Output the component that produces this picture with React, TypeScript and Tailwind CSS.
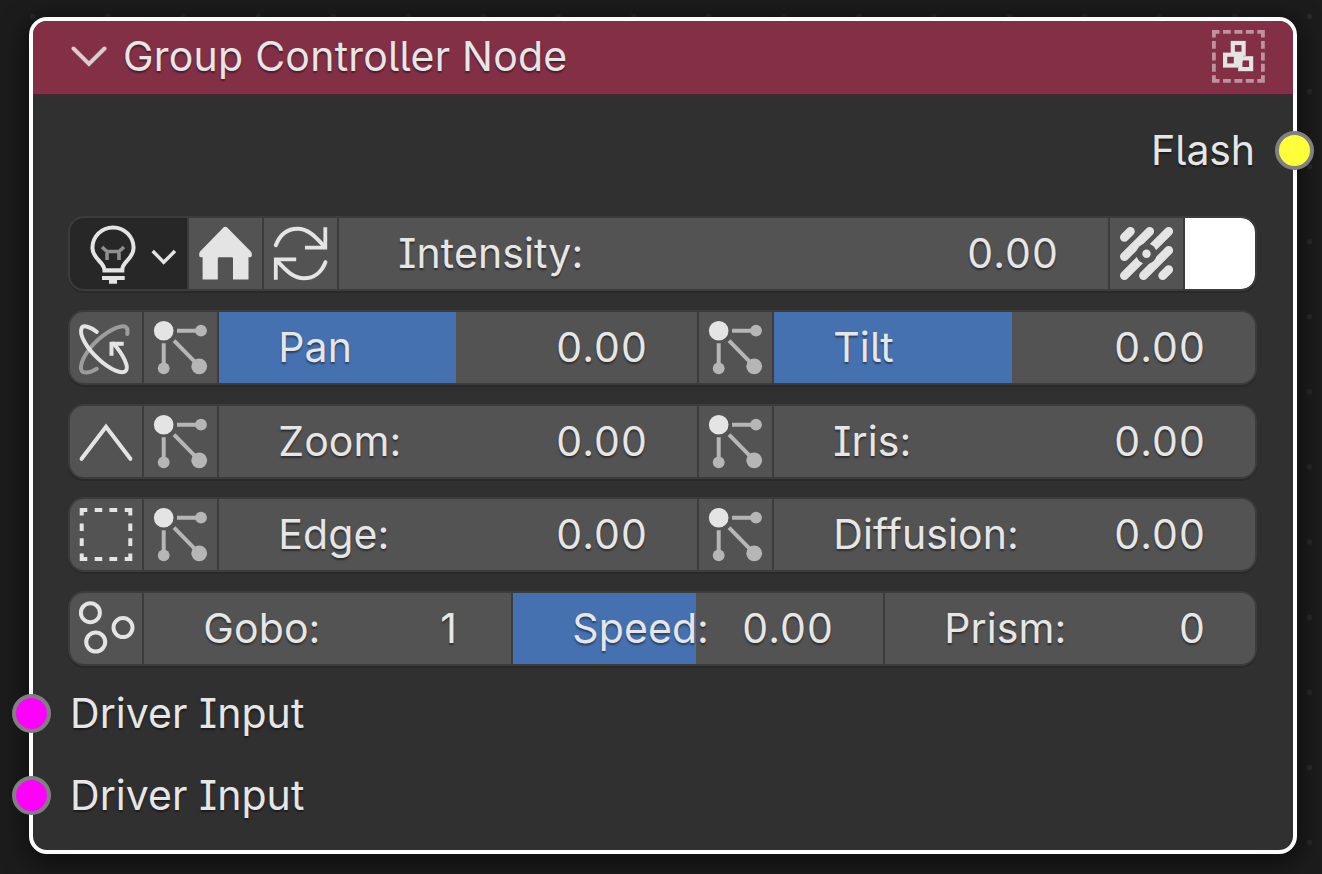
import type { ReactNode } from "react";

const LIGHT = "#e4e4e4";
const DIM = "#b6b6b6";

function Icon({ w, h = 71, children }: { w: number; h?: number; children: ReactNode }) {
  return (
    <svg width={w} height={h} viewBox={`0 0 ${w} ${h}`} fill="none" stroke={LIGHT} strokeWidth={4} className="block shrink-0">
      {children}
    </svg>
  );
}

function BulbIcon() {
  return (
    <Icon w={117}>
      <path d="M34.3 51.5C34 44 22.4 40.5 22.4 30A20.6 20.6 0 0 1 63.6 30C63.6 40.5 52.2 44 52.2 51.5" />
      <path d="M32.5 52.4H54.3" strokeWidth={4.2} />
      <path d="M32 60H54.7" strokeWidth={4.2} />
      <path d="M39 63H47" strokeWidth={5.5} />
      <path d="M32 29L37 33.5H49L54 29M37 33.5V42M49 33.5V42" stroke="#8f8f8f" strokeWidth={3.6} />
      <path d="M82.7 33L93.7 44.3L105 33" strokeWidth={3.4} />
    </Icon>
  );
}

function HomeIcon() {
  return (
    <Icon w={73}>
      <path
        d="M34.7 9.3Q36.3 8 37.9 9.3L61.6 33.2Q62.8 34.4 62.8 36V37.6Q62.8 39.3 61 39.3H59.5V61.5H44V40.5Q44 39.3 42.8 39.3H30Q28.8 39.3 28.8 40.5V61.5H13.6V39.3H12Q10.2 39.3 10.2 37.4V35.8Q10.2 34.2 11.3 33.2Z"
        fill={LIGHT}
        stroke="none"
      />
    </Icon>
  );
}

function RefreshIcon() {
  return (
    <Icon w={73}>
      <path d="M11.8 27.2C16 16.5 24 10.7 33.5 10.7C44.5 10.7 51.5 19 60.5 28.5" strokeLinecap="round" />
      <path d="M61.3 9.2V29.6H41" strokeWidth={3.8} />
      <path d="M61.4 44.2C57.5 54.5 49.5 60.3 40 60.3C29 60.3 21.5 52 12.7 42.5" strokeLinecap="round" />
      <path d="M11.8 61.8V41.4H32.2" strokeWidth={3.8} />
    </Icon>
  );
}

function HatchIcon() {
  return (
    <Icon w={73}>
      <mask id="hatch-hole">
        <rect width="73" height="71" fill="white" stroke="none" />
        <circle cx="36.5" cy="35.7" r="10.2" fill="black" stroke="none" />
      </mask>
      <g mask="url(#hatch-hole)" strokeWidth={8.8} strokeLinecap="round">
        <path d="M14.4 19.3L20.4 13.3M14.4 38.6L39.7 13.3M14.4 57.6L58.7 13.3M33.5 57.6L58.7 32.4M52.7 57.6L58.7 51.6" />
      </g>
      <circle cx="36.5" cy="35.7" r="4.2" fill={LIGHT} stroke="none" />
    </Icon>
  );
}

function OrbitIcon() {
  return (
    <Icon w={72}>
      <g strokeLinecap="round">
        <path d="M57.2 22C58.6 16 56 13.6 51 14.5C40.5 16.5 25 28 16.3 41.5C10.5 50.5 9.5 58 13 60C16.5 61.5 21.5 60 26.8 56.8" stroke="#9d9d9d" />
        <path d="M26.8 19.8C20.5 15 13 12.5 11.7 16C8.5 22.5 17 36.5 28.5 47C40 57.7 52 62.5 55.6 59C59.5 55 53.5 43 43.5 31.5" />
      </g>
      <path d="M53.7 31.7H41.5V43.7" />
    </Icon>
  );
}

function KeyNodesIcon() {
  return (
    <Icon w={73}>
      <g stroke={DIM} strokeWidth={4}>
        <path d="M33 18.7H57M19.7 31.3V56M30 28.7L55.3 54.3" />
      </g>
      <g fill={DIM} stroke="none">
        <circle cx="57" cy="18.7" r="5.9" />
        <circle cx="19.7" cy="56.3" r="5.9" />
        <circle cx="55.2" cy="54.3" r="7.9" />
      </g>
      <circle cx="19.7" cy="18.7" r="9.8" fill={LIGHT} stroke="none" />
    </Icon>
  );
}

function PeakIcon() {
  return (
    <Icon w={72}>
      <path d="M11.6 52.8L36 20.8L60.4 52.8" strokeLinecap="round" />
    </Icon>
  );
}

function DashedSquareIcon() {
  return (
    <Icon w={72}>
      <path d="M11.7 16.5V10.9H17.3M54.7 10.9H60.3V16.5M60.3 54.5V60.1H54.7M17.3 60.1H11.7V54.5M24.7 10.9H32.3M39.4 10.9H47.2M24.7 60.1H32.3M39.4 60.1H47.2M11.7 24.4V32M11.7 39.3V47M60.3 24.4V32M60.3 39.3V47" />
    </Icon>
  );
}

function CirclesIcon() {
  return (
    <Icon w={72}>
      <circle cx="20.4" cy="19.7" r="9.5" />
      <circle cx="53" cy="34.6" r="9.5" />
      <circle cx="25.7" cy="49" r="9.5" />
    </Icon>
  );
}

function GroupIcon() {
  return (
    <Icon w={53} h={53}>
      <path
        stroke="#bd939f"
        strokeWidth={3.8}
        d="M1.9 7.5V1.9H7.5M45.3 1.9H50.9V7.5M50.9 45.3V50.9H45.3M7.5 50.9H1.9V45.3M11 1.9H18.8M22.4 1.9H30.4M33.8 1.9H41.8M11 50.9H18.8M22.4 50.9H30.4M33.8 50.9H41.8M1.9 11V18.8M1.9 22.4V30.4M1.9 33.8V41.8M50.9 11V18.8M50.9 22.4V30.4M50.9 33.8V41.8"
      />
      <rect x="20.8" y="13" width="10.8" height="10.8" strokeWidth={4.2} />
      <rect x="13.1" y="24.7" width="10.8" height="10.8" strokeWidth={4.2} />
      <rect x="28.3" y="28.3" width="10.8" height="10.8" strokeWidth={4.2} />
      <path d="M23 23H31V29L29 37L23 35Z" fill={LIGHT} stroke="none" />
    </Icon>
  );
}

const rowClass =
  "flex h-[75px] w-[1189px] gap-[2px] overflow-hidden rounded-[16px] border-2 border-[#3c3c3c] bg-[#3c3c3c] shadow-[0_2px_0_#292929]";

function IconCell({ children, dark = false }: { children: ReactNode; dark?: boolean }) {
  return <div className={dark ? "shrink-0 bg-[#272727]" : "shrink-0 bg-[#535353]"}>{children}</div>;
}

function Field({ label, value, width, fill = 0 }: { label: string; value: string; width: number; fill?: number }) {
  return (
    <div
      className="flex shrink-0 items-center justify-between pr-[49px] pb-px pl-[59.3px]"
      style={{ width, background: `linear-gradient(to right, #4671b1 ${fill}px, #535353 ${fill}px)` }}
    >
      <span>{label}</span>
      <span className={value === "1" ? "pr-[5px]" : "tracking-[1.1px]"}>{value}</span>
    </div>
  );
}

function Socket({ className }: { className: string }) {
  return <div className={`absolute size-[39px] rounded-full border-4 border-[#808080] ${className}`} />;
}

export default function App() {
  return (
    <main className="h-[874px] w-[1322px] overflow-hidden bg-[#1c1c1c] bg-[radial-gradient(circle_at_33px_16.5px,#292929_2.4px,transparent_3.2px)] bg-[size:75.1px_75.1px] pt-[16.5px] pl-[29px] font-['Inter',sans-serif] text-[41px] leading-[50px] tracking-[0.1px] whitespace-nowrap text-[#e6e6e6] [font-feature-settings:'cv08','cv05'] [text-shadow:0_2px_2px_rgba(0,0,0,0.45)]">
      <section className="relative flex h-[837px] w-[1268px] flex-col rounded-[18px] border-4 border-white bg-[#303030] shadow-[0_6px_24px_4px_rgba(0,0,0,0.5)]">
        <header className="flex h-[75px] shrink-0 items-center rounded-t-[14px] border-b-2 border-[#4a2431] bg-[#833047] pr-[28.5px] pb-[2px] pl-[38px]">
          <Icon w={36} h={24}>
            <path d="M2.5 4.5L18 20L33.5 4.5" stroke="#d9cdd0" strokeLinecap="round" />
          </Icon>
          <h1 className="ml-[16px] grow tracking-[0.23px]">Group Controller Node</h1>
          <GroupIcon />
        </header>

        <div className="mt-[29px] flex h-[51px] shrink-0 justify-end pr-[38px] tracking-[-0.1px]">Flash</div>

        <div className="mt-[40.5px] ml-[35px] flex flex-col gap-[18.75px]">
          <div className={rowClass}>
            <IconCell dark><BulbIcon /></IconCell>
            <IconCell><HomeIcon /></IconCell>
            <IconCell><RefreshIcon /></IconCell>
            <Field label="Intensity:" value="0.00" width={769} />
            <IconCell><HatchIcon /></IconCell>
            <div className="grow rounded-r-[14px] bg-white" />
          </div>
          <div className={rowClass}>
            <IconCell><OrbitIcon /></IconCell>
            <IconCell><KeyNodesIcon /></IconCell>
            <Field label="Pan" value="0.00" width={478} fill={237} />
            <IconCell><KeyNodesIcon /></IconCell>
            <Field label="Tilt" value="0.00" width={481} fill={238} />
          </div>
          <div className={rowClass}>
            <IconCell><PeakIcon /></IconCell>
            <IconCell><KeyNodesIcon /></IconCell>
            <Field label="Zoom:" value="0.00" width={478} />
            <IconCell><KeyNodesIcon /></IconCell>
            <Field label="Iris:" value="0.00" width={481} />
          </div>
          <div className={rowClass}>
            <IconCell><DashedSquareIcon /></IconCell>
            <IconCell><KeyNodesIcon /></IconCell>
            <Field label="Edge:" value="0.00" width={478} />
            <IconCell><KeyNodesIcon /></IconCell>
            <Field label="Diffusion:" value="0.00" width={481} />
          </div>
          <div className={rowClass}>
            <IconCell><CirclesIcon /></IconCell>
            <Field label="Gobo:" value="1" width={367} />
            <Field label="Speed:" value="0.00" width={370} fill={183} />
            <Field label="Prism:" value="0" width={370} />
          </div>
        </div>

        <div className="mt-[22px] flex flex-col gap-[32px] pl-[37px] tracking-[0.05px]">
          <span>Driver Input</span>
          <span>Driver Input</span>
        </div>

        <Socket className="top-[110px] right-[-20.7px] bg-[#ffff39]" />
        <Socket className="top-[673px] left-[-21.5px] bg-[#ff00ff]" />
        <Socket className="top-[755.5px] left-[-21.5px] bg-[#ff00ff]" />
      </section>
    </main>
  );
}
